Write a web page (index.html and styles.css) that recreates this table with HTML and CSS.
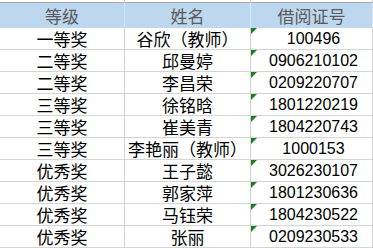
FILE: index.html
```html
<!DOCTYPE html>
<html lang="zh">
<head>
<meta charset="utf-8">
<link rel="stylesheet" href="styles.css">
</head>
<body>
<div class="sheet">
  <div class="cell strip"></div><div class="cell strip"></div><div class="cell strip"></div>
  <div class="cell head">等级</div><div class="cell head">姓名</div><div class="cell head">借阅证号</div>

  <div class="cell">一等奖</div><div class="cell">谷欣（教师）</div><div class="cell num">100496</div>
  <div class="cell">二等奖</div><div class="cell">邱曼婷</div><div class="cell num">0906210102</div>
  <div class="cell">二等奖</div><div class="cell">李昌荣</div><div class="cell num">0209220707</div>
  <div class="cell">三等奖</div><div class="cell">徐铭晗</div><div class="cell num">1801220219</div>
  <div class="cell">三等奖</div><div class="cell">崔美青</div><div class="cell num">1804220743</div>
  <div class="cell">三等奖</div><div class="cell">李艳丽（教师）</div><div class="cell num">1000153</div>
  <div class="cell">优秀奖</div><div class="cell">王子懿</div><div class="cell num">3026230107</div>
  <div class="cell">优秀奖</div><div class="cell">郭家萍</div><div class="cell num">1801230636</div>
  <div class="cell">优秀奖</div><div class="cell">马钰荣</div><div class="cell num">1804230522</div>
  <div class="cell">优秀奖</div><div class="cell">张丽</div><div class="cell num">0209230533</div>
</div>
</body>
</html>
```
FILE: styles.css
```css
html, body {
  margin: 0;
  padding: 0;
  background: #ffffff;
}
.sheet {
  display: grid;
  grid-template-columns: 125px 126px 122px;
  width: 373px;
  font-family: "Noto Sans CJK SC", sans-serif;
  font-size: 17px;
  color: #000;
}
.cell {
  box-sizing: border-box;
  height: 22px;
  border-right: 1px solid #d4d4d4;
  border-bottom: 1px solid #d4d4d4;
  display: flex;
  align-items: center;
  justify-content: center;
  white-space: nowrap;
  line-height: 1;
  position: relative;
}
.strip {
  height: 2px;
  border-bottom: none;
}
.head {
  height: 26px;
  background: #bdd7ee;
  color: #595959;
  border-top: 1px solid #a6a6a6;
  border-bottom: 1px solid #bdd7ee;
  border-right-color: #d6e5f3;
}
.num {
  font-family: "Liberation Sans", Arial, sans-serif;
  font-size: 16px;
  padding-left: 4px;
}
.num::before {
  content: "";
  position: absolute;
  left: 0;
  top: 0;
  border-top: 6px solid #1e7b1e;
  border-right: 6px solid transparent;
}
```
